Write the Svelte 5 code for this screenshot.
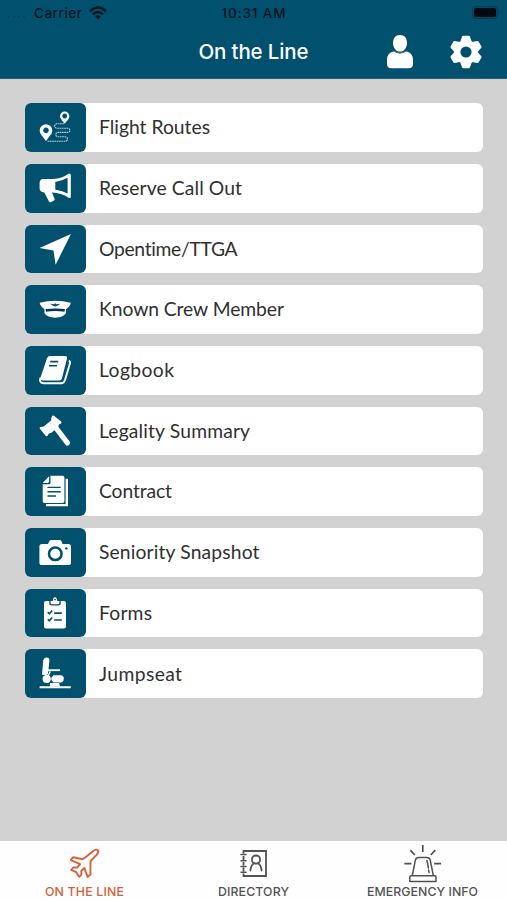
<script>
  const rows = [
    { label: 'Flight Routes', icon: 'route', width: 111 },
    { label: 'Reserve Call Out', icon: 'horn', width: 143 },
    { label: 'Opentime/TTGA', icon: 'arrow', width: 139 },
    { label: 'Known Crew Member', icon: 'cap', width: 185 },
    { label: 'Logbook', icon: 'book', width: 75 },
    { label: 'Legality Summary', icon: 'gavel', width: 151 },
    { label: 'Contract', icon: 'contract', width: 73 },
    { label: 'Seniority Snapshot', icon: 'camera', width: 160.5 },
    { label: 'Forms', icon: 'forms', width: 53 },
    { label: 'Jumpseat', icon: 'seat', width: 83 }
  ];
  const tabs = [
    { label: 'ON THE LINE', icon: 'plane', width: 79 },
    { label: 'DIRECTORY', icon: 'directory', width: 71 },
    { label: 'EMERGENCY INFO', icon: 'siren', width: 111 }
  ];

  // Tracks a line of text so that it spans the given width.
  function track(node, width) {
    const natural = node.getBoundingClientRect().width;
    const spacing = (width - natural) / (node.textContent.length - 1);
    node.style.letterSpacing = `${spacing}px`;
    node.style.marginRight = `${-spacing}px`;
  }
</script>

<div class="screen">
  <header>
    <div class="status">
      <div class="carrier">
        <span class="dots"><i></i><i></i><i></i><i></i></span>
        <span use:track={48}>Carrier</span>
        <svg width="18" height="14" viewBox="0 0 18 14" fill="none" stroke="#03151e" stroke-width="2.4">
          <path d="M1 5.3Q9-2.1 17 5.3M3.9 8.3Q9 3.5 14.1 8.3" />
          <path d="M9 13.3L6.1 10.4Q9 8.2 11.9 10.4Z" fill="#03151e" stroke="none" />
        </svg>
      </div>
      <div class="time"><span use:track={64}>10:31 AM</span></div>
      <div class="power">
        <svg width="29" height="13" viewBox="0 0 29 13">
          <rect x=".7" y=".7" width="24.6" height="11.6" rx="3" fill="none" stroke="#033e56" stroke-width="1.2" />
          <rect x="2" y="2" width="22" height="9" rx="1.5" fill="#000a10" />
          <path d="M26.6 4.5Q28.4 6.5 26.6 8.5Z" fill="#033e56" />
        </svg>
      </div>
    </div>
    <div class="nav">
      <h1><span use:track={110}>On the Line</span></h1>
      <div class="actions">
        <svg width="28" height="34" viewBox="0 0 28 34" fill="#fff">
          <path d="M14 0C18.6 0 21 3.3 21 8C21 12.8 18 16.6 14 16.6S7 12.8 7 8C7 3.3 9.4 0 14 0Z" />
          <path d="M8 16.5Q14 20.3 20 16.5C24.6 17 27 20.3 27 25V29Q27 33.3 22.5 33.3H5.5Q1 33.3 1 29V25C1 20.3 3.4 17 8 16.5Z" />
          <path d="M8 15.9Q14 19.7 20 15.9" fill="none" stroke="#3f7890" stroke-width=".9" />
        </svg>
        <svg width="34" height="34" viewBox="0 0 34 34">
          <g fill="#fff">
            <circle cx="17" cy="17" r="12" />
            {#each [0, 60, 120, 180, 240, 300] as angle}
              <path d="M11.2 7L13.1 1.6Q13.4.8 14.4.8H19.6Q20.6.8 20.9 1.6L22.8 7Z" transform="rotate({angle} 17 17)" />
            {/each}
          </g>
          <circle cx="17" cy="17" r="5.6" fill="#00506e" />
        </svg>
      </div>
    </div>
  </header>

  <main>
    {#each rows as row}
      <div class="row">
        <div class="tile">
          <svg viewBox="0 0 61 48.6" fill="#fff">
            {#if row.icon === 'route'}
              <path fill-rule="evenodd" d="M21 38.2C19.2 34.8 14.7 31.5 14.7 27.5A6.3 6.3 0 0 1 27.3 27.5C27.3 31.5 22.8 34.8 21 38.2ZM21 24.6a2.8 2.8 0 1 0 .01 0Z" />
              <path fill-rule="evenodd" d="M39.7 20.8C38.4 18.4 35 16.2 35 13.2A4.7 4.7 0 0 1 44.4 13.2C44.4 16.2 41 18.4 39.7 20.8ZM39.7 10.6a2.4 2.4 0 1 0 .01 0Z" />
              <path fill="none" stroke="#b9d1dc" stroke-width="1.1" stroke-dasharray="1.7 .6" d="M39 20.8H31.8a2.2 2.2 0 0 0 0 4.4H42.8a2.1 2.1 0 0 1 0 4.2H33a2.2 2.2 0 0 0 0 4.4h7.2a2.2 2.2 0 0 1 0 4.5H22" />
            {:else if row.icon === 'horn'}
              <path fill-rule="evenodd" d="M18.5 15H28C34 14.8 39.5 12.8 43.6 9.8Q45.8 8.8 45.8 11.3V32.5Q45.8 35 43.6 33.7C39 30.5 33 28.6 27 28.5L29.6 35Q29.9 36 29 36.5L25.8 38.2Q24.6 38.7 24 37.6L19.3 28.4Q14.6 28.2 14.6 24.3V19Q14.6 15 18.5 15ZM30.3 17.9V25.7Q36.6 26.4 42.6 29.6V13.8Q36.6 17.2 30.3 17.9Z" />
            {:else if row.icon === 'arrow'}
              <path d="M46 9L30.6 39.8 28.5 25.5 14.5 23Z" />
            {:else if row.icon === 'cap'}
              <path d="M14.7 17.8Q30.2 13.9 45.8 17.8Q45.7 21 40.7 24.5H19.8Q14.8 21 14.7 17.8Z" />
              <path d="M19.6 23.5H40.9L41 28C38 34.2 22.5 34.2 19.4 28Z" />
              <path d="M20.6 24Q30.2 22.9 39.9 24L39.5 26.7Q30.2 25.4 21 26.7Z" fill="#003850" />
              <path d="M25.2 18.7L29 19.3 30.2 18.2 31.5 19.3 35.3 18.7Q33 21 30.2 21.5Q27.5 21 25.2 18.7Z" fill="#00506e" />
            {:else if row.icon === 'book'}
              <path d="M25.2 10H39.8Q42.6 10 42 12.4L37 32.2Q36.4 34.4 34.2 34.4H18.3Q15 34.4 15.5 31.5L22 12.3Q22.8 10 25.2 10Z" />
              <path d="M25.2 15.6H33.2M24 19.8H32" stroke="#00506e" stroke-width="1.6" fill="none" />
              <path d="M43.8 14.6Q45.6 15.4 44.8 18L39.9 34.4Q38.9 37.2 36.3 37.2H18.5C14.9 37.2 14.4 34.4 15.6 31.5" fill="none" stroke="#fff" stroke-width="1.9" />
            {:else if row.icon === 'gavel'}
              <path d="M29.5 19L42.4 35.9" stroke="#fff" stroke-width="5.2" stroke-linecap="round" />
              <path d="M27.3 8.8Q28.3 8 29.2 9L36.2 14.6Q37 15.6 36 16.4L34 17.4 33 20.5 26.4 25.8 23.9 26.4 22.4 28.9Q21.4 29.8 20.6 28.7L14.9 21.8Q14.2 20.8 15.2 20.1L18.2 19.8 20 18.4 26.1 13.4 26.3 10.9Z" />
            {:else if row.icon === 'contract'}
              <path d="M40.6 11.7H43V39.3H21V37.1H40.6Z" />
              <path d="M25.5 8.7H37.5Q39.4 8.7 39.4 10.6V34.2Q39.4 36 37.5 36H19.5Q17.7 36 17.7 34.2V17.3H24Q25.5 17.3 25.5 15.7Z" />
              <path d="M17.7 15.9L24.1 9.2V14.5Q24.1 15.9 22.8 15.9Z" />
              <path d="M22.5 20.4H35.7M22.5 24.7H35.7M22.5 29H31" stroke="#00506e" stroke-width="1.4" />
            {:else if row.icon === 'camera'}
              <path d="M17 16H23L24.3 13.2Q24.8 12 26 12H34.8Q36 12 36.4 13.2L37.6 16H43.5Q46 16 46 18.5V34.4Q46 37 43.5 37H17Q14.4 37 14.4 34.4V18.5Q14.4 16 17 16Z" />
              <circle cx="30.3" cy="25.8" r="6.3" fill="none" stroke="#00506e" stroke-width="2.5" />
              <circle cx="41.4" cy="20.4" r="1.2" fill="#00506e" />
            {:else if row.icon === 'forms'}
              <rect x="19" y="12" width="22" height="27.4" rx="2" />
              <path d="M24.3 11.5H35.7V14.2Q35.7 16.5 33.5 16.5H26.5Q24.3 16.5 24.3 14.2Z" fill="#00506e" />
              <path fill-rule="evenodd" d="M25.6 12H27.8Q28 8.3 30 8.3T32.2 12H34.4V13.7Q34.4 15.2 33 15.2H27Q25.6 15.2 25.6 13.7ZM30 9.8a.8 .8 0 1 0 .01 0Z" />
              <path d="M22.8 23.2L24.3 24.8 27.2 21.4M22.8 30.2L24.3 31.8 27.2 28.4M29.2 24.1H36.8M29.2 31H36.8" fill="none" stroke="#00506e" stroke-width="1.6" />
            {:else}
              <path d="M18.2 11.5Q19 8.4 21.8 8.6T24.4 11.6L23 24.5Q22.6 26 21 26H18.5Q17 26 17.1 24.5Z" />
              <path d="M22 21.2H35" fill="none" stroke="#fff" stroke-width="1.8" />
              <path d="M25.3 22.2L23.4 26.6H20" fill="none" stroke="#fff" stroke-width="1.3" />
              <circle cx="21.7" cy="30" r="4.1" />
              <path d="M28.5 26.2H36Q38 26.2 38.7 28.5V31Q38 33.4 36 33.4H28.5L26.6 31V28.5Z" />
              <path d="M24.8 34H34L35 37.5H25Z" />
              <path d="M14.6 37.3H45.8V39.2H14.6ZM25.4 29.4H31V30.3H25.4Z" />
            {/if}
          </svg>
        </div>
        <div class="label"><span use:track={row.width}>{row.label}</span></div>
      </div>
    {/each}
  </main>

  <nav class="tabs">
    {#each tabs as tab, i}
      <div class="tab" class:active={i === 0}>
        <svg width="40" height="40" viewBox="0 0 40 40" fill="none" stroke="currentColor" stroke-width="1.5" stroke-linejoin="round" stroke-linecap="round">
          {#if tab.icon === 'plane'}
            <path stroke-width="1.9" d="M21.5 11.4L28.2 5.9Q31.3 3.7 32.8 5.2T31.8 9.6L25.7 16L25.4 19.5L25.5 29.6L22.6 31.9L19.4 23L16.3 26L16.4 29.6L14.2 31.9L11.2 27.2L6.2 24.8L8.4 22.4L12.2 22.6L15.2 19.2L5.8 15.2L8.3 12.2L17.6 14.2Z" />
          {:else if tab.icon === 'directory'}
            <path stroke-linecap="butt" stroke-linejoin="miter" stroke-width="1.8" d="M9.5 8.5V6H32V31H9.5V28.5M9.5 11V15M9.5 17V20.5M9.5 22.5V26.5" />
            <path stroke-width="1.5" d="M7 9.5H12M7 15.7H12M7 21.4H12M7 27.3H12" />
            <circle cx="22" cy="14.6" r="4.1" stroke-width="1.8" />
            <path stroke-width="1.8" d="M20 18.3Q16.9 20 16.4 25.5M24 18.3Q27.1 20 27.6 25.5" />
          {:else}
            <g transform="translate(.8 0)">
              <path stroke-width="1.5" d="M6 32Q6 30.7 7.2 30.7H31Q32.2 30.7 32.2 32V36.5H6ZM8.5 30.5L11.5 15.3Q12.3 12.6 15.2 12.6H22.8Q25.7 12.6 26.5 15.3L29.5 30.5M23.1 15.5L24.7 23M24.7 25L25.3 27.5" />
              <path stroke-width="1.7" stroke-linecap="butt" d="M19 0V7M6.5 5.2L11 10M31.5 5.2L27 10M.6 18.7H7.6M30.3 18.7H37.3" />
            </g>
          {/if}
        </svg>
        <div><span use:track={tab.width}>{tab.label}</span></div>
      </div>
    {/each}
  </nav>
</div>

<style>
  :global(body) { margin: 0; }
  .screen {
    width: 507px;
    height: 900px;
    display: flex;
    flex-direction: column;
    background: #d2d2d2;
    font-family: Inter, sans-serif;
    overflow: hidden;
  }
  span { white-space: nowrap; }
  header {
    height: 79px;
    flex: none;
    box-sizing: border-box;
    background: #00506e;
    border-bottom: 1px solid #2a5c73;
  }
  .status, .nav {
    display: grid;
    grid-template-columns: 1fr auto 1fr;
    align-items: center;
  }
  .status {
    height: 25px;
    font-size: 13.5px;
    font-weight: 500;
    color: #03151e;
  }
  .carrier {
    display: flex;
    align-items: center;
    padding-left: 8px;
  }
  .carrier svg { margin-left: 7px; }
  .dots {
    display: flex;
    gap: 3px;
    width: 26px;
    padding-top: 8px;
  }
  .dots i {
    width: 2px;
    height: 2px;
    border-radius: 1px;
    background: #063f58;
  }
  .power {
    display: flex;
    justify-content: flex-end;
    padding-right: 6px;
  }
  .nav { height: 53px; }
  h1 {
    grid-column: 2;
    margin: 0;
    font-size: 20.5px;
    line-height: 24px;
    font-weight: 500;
    color: #fff;
  }
  .actions {
    display: flex;
    justify-content: flex-end;
    gap: 35px;
    padding-right: 24px;
  }
  main {
    flex: 1;
    display: flex;
    flex-direction: column;
    gap: 12.1px;
    padding: 24.3px 24.5px 0 25px;
  }
  .row {
    display: flex;
    height: 48.6px;
    flex: none;
    background: #fff;
    border-radius: 6px;
  }
  .tile {
    width: 61px;
    border-radius: 6px;
    background: #00506e;
  }
  .tile svg {
    display: block;
    width: 61px;
    height: 48.6px;
  }
  .label {
    display: flex;
    align-items: center;
    padding: 0 0 1.5px 13px;
    font: 19.3px Lato, sans-serif;
    color: #303030;
  }
  .tabs {
    height: 59px;
    flex: none;
    display: grid;
    grid-template-columns: repeat(3, 1fr);
    background: #fefefe;
  }
  .tab {
    display: flex;
    flex-direction: column;
    align-items: center;
    padding-top: 4px;
    font-size: 12.3px;
    line-height: 14px;
    font-weight: 500;
    color: #505254;
  }
  .tab svg { flex: none; }
  .active { color: #d3613c; }
</style>
